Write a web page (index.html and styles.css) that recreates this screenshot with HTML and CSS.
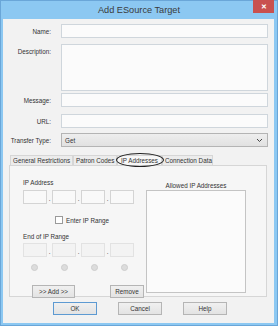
FILE: index.html
```html
<!DOCTYPE html>
<html lang="en">
<head>
    <meta charset="UTF-8">
    <title>Add ESource Target</title>
    <link rel="stylesheet" href="styles.css">
</head>
<body>
    <div class="window">
        <div class="titlebar">
            Add ESource Target
            <span class="close">&#x2715;</span>
        </div>

        <div class="content">
            <div class="row row-name">
                <label>Name:</label>
                <input type="text" class="field">
            </div>

            <div class="row row-desc">
                <label>Description:</label>
                <textarea class="field area"></textarea>
            </div>

            <div class="row row-msg">
                <label>Message:</label>
                <input type="text" class="field">
            </div>

            <div class="row row-url">
                <label>URL:</label>
                <input type="text" class="field">
            </div>

            <div class="row row-type">
                <label>Transfer Type:</label>
                <div class="field select">
                    <span>Get</span>
                    <svg width="7" height="5" viewBox="0 0 7 5"><path d="M1 1 L3.5 3.5 L6 1" fill="none" stroke="#444" stroke-width="1"/></svg>
                </div>
            </div>

            <div class="tabs">
                <div class="tab t1">General Restrictions</div>
                <div class="tab t2">Patron Codes</div>
                <div class="tab t3 active">IP Addresses<span class="ring"></span></div>
                <div class="tab t4">Connection Data</div>
            </div>

            <div class="panel">
                <div class="left">
                    <div class="caption">IP Address</div>
                    <div class="ip">
                        <span class="box"></span><span class="dot">.</span>
                        <span class="box"></span><span class="dot">.</span>
                        <span class="box"></span><span class="dot">.</span>
                        <span class="box"></span>
                    </div>

                    <label class="check">
                        <span class="tick"></span>
                        Enter IP Range
                    </label>

                    <div class="caption caption-end">End of IP Range</div>
                    <div class="ip ip-end">
                        <span class="box"></span><span class="dot">.</span>
                        <span class="box"></span><span class="dot">.</span>
                        <span class="box"></span><span class="dot">.</span>
                        <span class="box"></span>
                    </div>

                    <div class="radios">
                        <span class="radio"></span>
                        <span class="radio"></span>
                        <span class="radio"></span>
                        <span class="radio"></span>
                    </div>

                    <div class="actions">
                        <button class="btn btn-add">&gt;&gt; Add &gt;&gt;</button>
                        <button class="btn btn-remove">Remove</button>
                    </div>
                </div>

                <div class="right">
                    <div class="caption list-title">Allowed IP Addresses</div>
                    <div class="list"></div>
                </div>
            </div>

            <div class="footer">
                <button class="btn btn-ok">OK</button>
                <button class="btn">Cancel</button>
                <button class="btn">Help</button>
            </div>
        </div>
    </div>
</body>
</html>
```

FILE: styles.css
```css
* {
    box-sizing: border-box;
}

body {
    margin: 0;
    background-color: #ffffff;
    font-family: "Liberation Sans", Arial, sans-serif;
}

.window {
    width: 278px;
    height: 326px;
    display: flex;
    flex-direction: column;
    background-color: #8cc8f2;
    border: 1px solid #6aa6d8;
}

.titlebar {
    position: relative;
    height: 18px;
    line-height: 18px;
    text-align: center;
    font-size: 9.2px;
    color: #3a3a3a;
}

.close {
    position: absolute;
    top: -1px;
    right: 3px;
    width: 21px;
    height: 13px;
    line-height: 13px;
    background-color: #c9514f;
    color: #ffffff;
    font-size: 7px;
    font-weight: bold;
}

.content {
    flex: 1;
    margin: 0 3px 2px 2px;
    background-color: #f2f2f2;
    font-size: 6.3px;
    color: #333333;
    padding-top: 5px;
}

.row {
    display: flex;
    align-items: center;
}

.row label {
    width: 48px;
    text-align: right;
    margin-right: 10px;
}

.field {
    width: 207px;
    height: 14px;
    border: 1px solid #cfd6dc;
    background-color: #fbfbfb;
    margin: 0;
    padding: 0;
    font: inherit;
}

.row-desc {
    align-items: flex-start;
    margin-top: 6px;
}

.row-desc label {
    padding-top: 4px;
}

.area {
    height: 47px;
    resize: none;
}

.row-msg {
    margin-top: 2px;
}

.row-url {
    margin-top: 7px;
}

.row-type {
    margin-top: 5px;
}

.select {
    display: flex;
    align-items: center;
    justify-content: space-between;
    padding: 0 4px 0 3px;
    background: linear-gradient(#eeeeee, #e1e1e1);
    border-color: #b4b4b4;
}

.tabs {
    display: flex;
    margin: 8px 0 0 7px;
    height: 10px;
}

.tab {
    position: relative;
    height: 10px;
    line-height: 9px;
    padding: 0 2px;
    border: 1px solid #d6d6d6;
    border-bottom: none;
    background-color: #ececec;
    white-space: nowrap;
    text-align: center;
}

.t1 { width: 63px; }
.t2 { width: 44px; }
.t3 { width: 45px; }
.t4 { width: 51px; }

.tab.active {
    background-color: #f7f7f7;
    z-index: 1;
}

.ring {
    position: absolute;
    left: -2px;
    top: -3px;
    width: 48px;
    height: 14px;
    border: 1.4px solid #222222;
    border-radius: 50%;
}

.panel {
    display: flex;
    margin-left: 6px;
    width: 258px;
    height: 132px;
    border: 1px solid #d6d6d6;
    background-color: #f6f6f6;
}

.left {
    width: 136px;
    padding: 13px 0 0 13px;
}

.caption {
    height: 8px;
    line-height: 8px;
}

.ip {
    display: flex;
    margin-top: 3px;
}

.box {
    width: 24px;
    height: 14px;
    border: 1px solid #d4d4d4;
    background-color: #f9f9f9;
}

.dot {
    width: 5px;
    text-align: center;
    line-height: 17px;
}

.ip-end .box {
    border-color: #e2e2e2;
    background-color: #f3f3f3;
}

.check {
    display: flex;
    align-items: center;
    gap: 3px;
    margin: 9px 0 0 32px;
    height: 8px;
}

.tick {
    width: 8px;
    height: 8px;
    border: 1px solid #9a9a9a;
    background-color: #ffffff;
}

.caption-end {
    margin-top: 9px;
}

.ip-end {
    margin-top: 2px;
}

.radios {
    display: flex;
    gap: 23px;
    margin: 4px 0 0 8px;
}

.radio {
    width: 7px;
    height: 7px;
    border-radius: 50%;
    border: 1px solid #cdcdcd;
    background-color: #dcdcdc;
}

.actions {
    display: flex;
    margin-top: 14px;
    padding-left: 9px;
    gap: 35px;
}

.btn {
    height: 13px;
    padding: 0;
    border: 1px solid #b5b5b5;
    background: linear-gradient(#f0f0f0, #e3e3e3);
    font: inherit;
    color: #333333;
}

.btn-add {
    width: 43px;
}

.btn-remove {
    width: 34px;
}

.right {
    width: 100px;
    padding-top: 16px;
}

.list-title {
    text-align: center;
    height: 8px;
}

.list {
    height: 103px;
    border: 1px solid #c4c4c4;
    background-color: #fbfbfb;
}

.footer {
    display: flex;
    gap: 21px;
    margin: 5px 0 0 50px;
}

.footer .btn {
    width: 44px;
}

.btn-ok {
    border-color: #5d9ad2;
}
```
